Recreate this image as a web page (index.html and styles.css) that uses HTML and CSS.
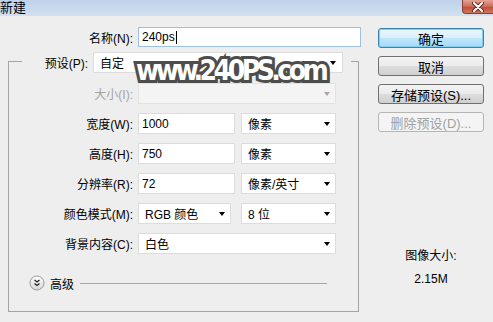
FILE: index.html
```html
<!DOCTYPE html>
<html lang="zh-CN">
<head>
    <meta charset="UTF-8">
    <title>新建</title>
    <link rel="stylesheet" href="styles.css">
</head>
<body>
    <div class="titlebar">
        <span class="title">新建</span>
        <span class="close-btn">
            <svg width="14" height="10" viewBox="0 0 14 10">
                <path d="M3 1 L11 9 M11 1 L3 9" stroke="#6b2a20" stroke-width="4" stroke-linecap="round"/>
                <path d="M3 1 L11 9 M11 1 L3 9" stroke="#ffffff" stroke-width="2" stroke-linecap="round"/>
            </svg>
        </span>
    </div>

    <div class="dialog">
        <div class="main">
            <div class="name-row">
                <label class="label">名称(N):</label>
                <div class="field input name-input">240ps<span class="caret"></span></div>
            </div>

            <!-- group box with preset row sitting on its top border -->
            <div class="group">
                <div class="preset-row">
                    <label class="preset-label">预设(P):</label>
                    <div class="field select preset-select"><span>自定</span><i class="arrow"></i></div>
                </div>

                <div class="row size-row">
                    <label class="label disabled">大小(I):</label>
                    <div class="field select full disabled-field"><span></span><i class="arrow grey"></i></div>
                </div>

                <div class="row">
                    <label class="label">宽度(W):</label>
                    <div class="field input num">1000</div>
                    <div class="field select unit"><span>像素</span><i class="arrow"></i></div>
                </div>

                <div class="row">
                    <label class="label">高度(H):</label>
                    <div class="field input num">750</div>
                    <div class="field select unit"><span>像素</span><i class="arrow"></i></div>
                </div>

                <div class="row">
                    <label class="label">分辨率(R):</label>
                    <div class="field input num">72</div>
                    <div class="field select unit"><span>像素/英寸</span><i class="arrow"></i></div>
                </div>

                <div class="row">
                    <label class="label">颜色模式(M):</label>
                    <div class="field select mode"><span>RGB 颜色</span><i class="arrow"></i></div>
                    <div class="field select unit"><span>8 位</span><i class="arrow"></i></div>
                </div>

                <div class="row">
                    <label class="label">背景内容(C):</label>
                    <div class="field select full"><span>白色</span><i class="arrow"></i></div>
                </div>

                <div class="advanced">
                    <svg class="adv-icon" width="16" height="16" viewBox="0 0 16 16">
                        <defs>
                            <linearGradient id="advBg" x1="0" y1="0" x2="0" y2="1">
                                <stop offset="0" stop-color="#ffffff"/>
                                <stop offset="1" stop-color="#d6d6d6"/>
                            </linearGradient>
                        </defs>
                        <circle cx="8" cy="8" r="7" fill="url(#advBg)" stroke="#9a9a9a"/>
                        <path d="M5.5 5 L8 7 L10.5 5 M5.5 8.5 L8 10.5 L10.5 8.5" fill="none" stroke="#222" stroke-width="1.3"/>
                    </svg>
                    <span class="adv-text">高级</span>
                    <span class="adv-line"></span>
                </div>
            </div>
        </div>

        <div class="side">
            <button class="btn default">确定</button>
            <button class="btn">取消</button>
            <button class="btn">存储预设(S)...</button>
            <button class="btn" disabled>删除预设(D)...</button>

            <div class="info">
                <div>图像大小:</div>
                <div class="info-size">2.15M</div>
            </div>
        </div>
    </div>

    <div class="watermark">www.240PS.com</div>
</body>
</html>
```

FILE: styles.css
```css
body {
    margin: 0;
    background-color: #eeeeee;
    font-family: "Liberation Sans", "Noto Sans CJK SC", sans-serif;
    font-size: 12px;
    color: #000;
    position: relative;
    overflow: hidden;
}

/* title bar */
.titlebar {
    height: 16px;
    display: flex;
    justify-content: space-between;
    align-items: flex-start;
    background: linear-gradient(#bfd2ea, #d2e0f1);
}

.title {
    font-size: 13px;
    line-height: 16px;
}

.close-btn {
    width: 31px;
    height: 14px;
    display: flex;
    align-items: center;
    justify-content: center;
    background: linear-gradient(#e3a597, #cd6a55 50%, #c04a33 51%, #d0785f);
    border: 1px solid #8a3e31;
    border-top: none;
    border-right: none;
    border-radius: 0 0 0 4px;
    box-sizing: border-box;
}

.dialog {
    display: flex;
    padding-top: 11px;
}

.main {
    width: 361px;
}

/* rows */
.name-row,
.row,
.preset-row {
    display: flex;
    align-items: center;
}

.label {
    width: 133px;
    text-align: right;
    margin-right: 5px;
    white-space: nowrap;
}

.label.disabled {
    color: #a3a3a3;
}

.field {
    height: 21px;
    box-sizing: border-box;
    background-color: #fff;
    border: 1px solid #dcdcdc;
    display: flex;
    align-items: center;
    white-space: nowrap;
}

.input {
    padding-left: 3px;
}

.name-input {
    width: 223px;
    height: 20px;
    border-color: #9cc0e2;
}

.caret {
    display: inline-block;
    width: 1px;
    height: 13px;
    background-color: #000;
    margin-left: 1px;
}

.select {
    justify-content: space-between;
    padding-left: 6px;
    padding-right: 5px;
}

.arrow {
    width: 0;
    height: 0;
    border-left: 3.5px solid transparent;
    border-right: 3.5px solid transparent;
    border-top: 4px solid #000;
}

.arrow.grey {
    border-top-color: #a8a8a8;
}

.disabled-field {
    background-color: #f4f4f4;
    border-color: #e2e2e2;
}

/* group box */
.group {
    margin-left: 8px;
    margin-top: 14px;
    width: 351px;
    height: 251px;
    box-sizing: border-box;
    border: 1px solid #a4a4a4;
}

.preset-row {
    margin: -10px 7px 0 13px;
    padding-right: 8px;
    background-color: #eeeeee;
}

.preset-label {
    width: 66px;
    text-align: right;
    margin-right: 5px;
}

.preset-select {
    width: 250px;
    padding-right: 6px;
}

.row {
    margin-top: 9px;
}

.row .label {
    width: 124px;
}

.size-row {
    margin-top: 10px;
}

.full {
    width: 198px;
}

.num {
    width: 97px;
}

.unit {
    width: 95px;
    margin-left: 6px;
}

.mode {
    width: 93px;
    margin-right: 4px;
}

/* advanced toggle */
.advanced {
    display: flex;
    align-items: center;
    margin: 21px 31px 0 20px;
    height: 16px;
}

.adv-text {
    margin-left: 5px;
    font-size: 12px;
}

.adv-line {
    flex: 1;
    height: 1px;
    margin-left: 6px;
    background-color: #a8a8a8;
}

/* right column */
.side {
    width: 106px;
    margin-left: 17px;
    padding-top: 1px;
    display: flex;
    flex-direction: column;
}

.btn {
    height: 20px;
    margin-bottom: 8px;
    padding: 0;
    font-family: "Liberation Sans", "Noto Sans CJK SC", sans-serif;
    font-size: 13px;
    color: #000;
    border: 1px solid #707070;
    border-radius: 3px;
    background: linear-gradient(#f3f3f3, #ebebeb 50%, #dddddd 51%, #d0d0d0);
}

.btn.default {
    border-color: #3c7fb1;
    background: linear-gradient(#eaf6fd, #d9f0fc 50%, #bee6fd 51%, #a7d9f5);
    box-shadow: inset 0 0 0 1px #7fd1f4;
}

.btn:disabled {
    color: #a2a2a2;
    border-color: #b5b5b5;
    background: #f4f4f4;
}

.info {
    margin-top: 108px;
    text-align: center;
    line-height: 16px;
}

.info-size {
    margin-top: 7px;
}

/* site watermark over the dialog */
.watermark {
    position: absolute;
    left: 136px;
    top: 54px;
    font-family: "DejaVu Sans", sans-serif;
    font-weight: bold;
    font-stretch: condensed;
    font-size: 28px;
    letter-spacing: -3.5px;
    color: #fff;
    -webkit-text-stroke: 6px #4d4d4d;
    paint-order: stroke fill;
    white-space: nowrap;
}
```
